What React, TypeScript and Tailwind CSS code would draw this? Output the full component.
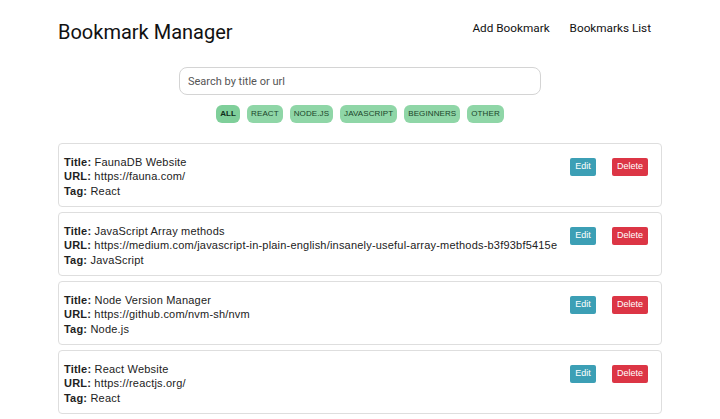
import React from 'react';

type Bookmark = {
  title: string;
  url: string;
  tag: string;
};

const bookmarks: Bookmark[] = [
  { title: 'FaunaDB Website', url: 'https://fauna.com/', tag: 'React' },
  {
    title: 'JavaScript Array methods',
    url: 'https://medium.com/javascript-in-plain-english/insanely-useful-array-methods-b3f93bf5415e',
    tag: 'JavaScript',
  },
  { title: 'Node Version Manager', url: 'https://github.com/nvm-sh/nvm', tag: 'Node.js' },
  { title: 'React Website', url: 'https://reactjs.org/', tag: 'React' },
];

const tags = ['All', 'React', 'Node.js', 'JavaScript', 'Beginners', 'Other'];

function BookmarkCard({ bookmark }: { bookmark: Bookmark }) {
  return (
    <div className="flex h-[64px] items-center justify-between rounded-[4px] border border-[#dedede] bg-white pl-[5px] pr-[13px]">
      <div className="pt-[3px] text-[11px] leading-[14.5px] tracking-[0.2px] text-[#222]">
        <p>
          <span className="font-bold">Title:</span> {bookmark.title}
        </p>
        <p>
          <span className="font-bold">URL:</span> {bookmark.url}
        </p>
        <p>
          <span className="font-bold">Tag:</span> {bookmark.tag}
        </p>
      </div>
      <div className="mb-[16px] flex gap-4">
        <button className="h-[18px] w-[26px] rounded-[2px] bg-[#3c9fb5] text-[9px] text-white">
          Edit
        </button>
        <button className="h-[18px] w-[36px] rounded-[2px] bg-[#dc3545] text-[9px] text-white">
          Delete
        </button>
      </div>
    </div>
  );
}

export default function App() {
  return (
    <div className="min-h-screen bg-white font-['Liberation_Sans',Arial,sans-serif] text-[#111]">
      <header className="flex items-start justify-between pl-[58px] pr-[69px] pt-[19px]">
        <h1 className="text-[20px] leading-[26px] font-['Roboto',sans-serif] text-[#111]">
          Bookmark Manager
        </h1>
        <nav className="mt-[1px] flex gap-[20px] text-[11.75px] font-['Roboto',sans-serif] text-[#111]">
          <a>Add Bookmark</a>
          <a>Bookmarks List</a>
        </nav>
      </header>

      <div className="mt-[22px] flex flex-col items-center">
        <input
          placeholder="Search by title or url"
          className="h-[28px] w-[362px] rounded-[8px] border border-[#d4d4d4] px-2 text-[11px] font-['Roboto',sans-serif] placeholder:text-[#555] outline-none"
        />
        <div className="mt-[10px] flex gap-[7px]">
          {tags.map((t, i) => (
            <span
              key={t}
              className={
                i === 0
                  ? 'flex h-[18px] items-center rounded-[6px] bg-[#7fcf9a] px-[4px] text-[8px] font-bold tracking-[0.1px] text-[#0f2e1a]'
                  : 'flex h-[18px] items-center rounded-[6px] bg-[#8fd6a7] px-[4px] text-[8px] tracking-[0.1px] text-[#1a4429]'
              }
            >
              {t.toUpperCase()}
            </span>
          ))}
        </div>
      </div>

      <div className="mx-[58px] mt-[20px] flex flex-col gap-[5px]">
        {bookmarks.map((b) => (
          <BookmarkCard key={b.title} bookmark={b} />
        ))}
      </div>
    </div>
  );
}
